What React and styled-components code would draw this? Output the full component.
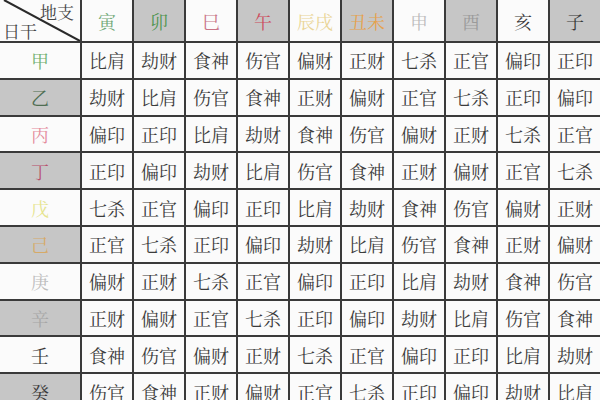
import React from "react";
import styled, { createGlobalStyle } from "styled-components";

const Global = createGlobalStyle`
  html, body { margin: 0; padding: 0; background: #ffffff; overflow: hidden; }
  body { width: 600px; height: 400px; }
`;

const Table = styled.div`
  display: grid;
  grid-template-columns: 80px repeat(10, 50px);
  grid-template-rows: 41px repeat(10, 34.8px);
  gap: 2px;
  background: #3a3a3a;
  width: 600px;
  font-family: "Noto Serif CJK SC", "Noto Sans CJK SC", serif;
`;

const Cell = styled.div`
  display: flex;
  align-items: center;
  justify-content: center;
  background: ${(p) => (p.$shade ? "#c6c6c6" : "#fbfbfb")};
  color: ${(p) => p.$color || "#3c3c3c"};
  font-size: 18px;
  line-height: 1;
  white-space: nowrap;
`;

const Corner = styled.div`
  position: relative;
  display: flex;
  flex-direction: column;
  justify-content: space-between;
  padding: 3px 6px 2px 3px;
  background: #fbfbfb;
  color: #444;
  font-size: 17px;
  line-height: 1;
`;

const Diagonal = styled.svg`
  position: absolute;
  inset: 0;
  width: 100%;
  height: 100%;
  pointer-events: none;
`;

const CornerLabel = styled.span`
  position: relative;
  align-self: ${(p) => (p.$top ? "flex-end" : "flex-start")};
  line-height: 1;
`;

const heads = [
  { t: "寅", c: "#72aa78" },
  { t: "卯", c: "#4e944e", s: true },
  { t: "巳", c: "#c87486" },
  { t: "午", c: "#cc4e5e", s: true },
  { t: "辰戌", c: "#ead596" },
  { t: "丑未", c: "#e5a24e", s: true },
  { t: "申", c: "#bcbcbc" },
  { t: "酉", c: "#9a9a9a", s: true },
  { t: "亥", c: "#3a3a3a" },
  { t: "子", c: "#3a3a3a", s: true },
];

const rows = [
  { h: "甲", c: "#6fb06f", d: "比肩 劫财 食神 伤官 偏财 正财 七杀 正官 偏印 正印" },
  { h: "乙", c: "#4f6e52", s: true, d: "劫财 比肩 伤官 食神 正财 偏财 正官 七杀 正印 偏印" },
  { h: "丙", c: "#e48a9c", d: "偏印 正印 比肩 劫财 食神 伤官 偏财 正财 七杀 正官" },
  { h: "丁", c: "#b8506e", s: true, d: "正印 偏印 劫财 比肩 伤官 食神 正财 偏财 正官 七杀" },
  { h: "戊", c: "#e6e48e", d: "七杀 正官 偏印 正印 比肩 劫财 食神 伤官 偏财 正财" },
  { h: "己", c: "#d6aa68", s: true, d: "正官 七杀 正印 偏印 劫财 比肩 伤官 食神 正财 偏财" },
  { h: "庚", c: "#bdbdbd", d: "偏财 正财 七杀 正官 偏印 正印 比肩 劫财 食神 伤官" },
  { h: "辛", c: "#a6a6a6", s: true, d: "正财 偏财 正官 七杀 正印 偏印 劫财 比肩 伤官 食神" },
  { h: "壬", c: "#3a3a3a", d: "食神 伤官 偏财 正财 七杀 正官 偏印 正印 比肩 劫财" },
  { h: "癸", c: "#3a3a3a", s: true, d: "伤官 食神 正财 偏财 正官 七杀 正印 偏印 劫财 比肩" },
];

export default function App() {
  return (
    <>
      <Global />
      <Table>
        <Corner>
          <Diagonal viewBox="0 0 80 41" preserveAspectRatio="none">
            <line x1="4" y1="0" x2="80" y2="41" stroke="#2a2a2a" strokeWidth="2" />
          </Diagonal>
          <CornerLabel $top>地支</CornerLabel>
          <CornerLabel>日干</CornerLabel>
        </Corner>
        {heads.map((h) => (
          <Cell key={h.t} $shade={h.s} $color={h.c}>
            {h.t}
          </Cell>
        ))}
        {rows.map((r) => (
          <React.Fragment key={r.h}>
            <Cell $shade={r.s} $color={r.c}>
              {r.h}
            </Cell>
            {r.d.split(" ").map((v, i) => (
              <Cell key={i}>{v}</Cell>
            ))}
          </React.Fragment>
        ))}
      </Table>
    </>
  );
}
